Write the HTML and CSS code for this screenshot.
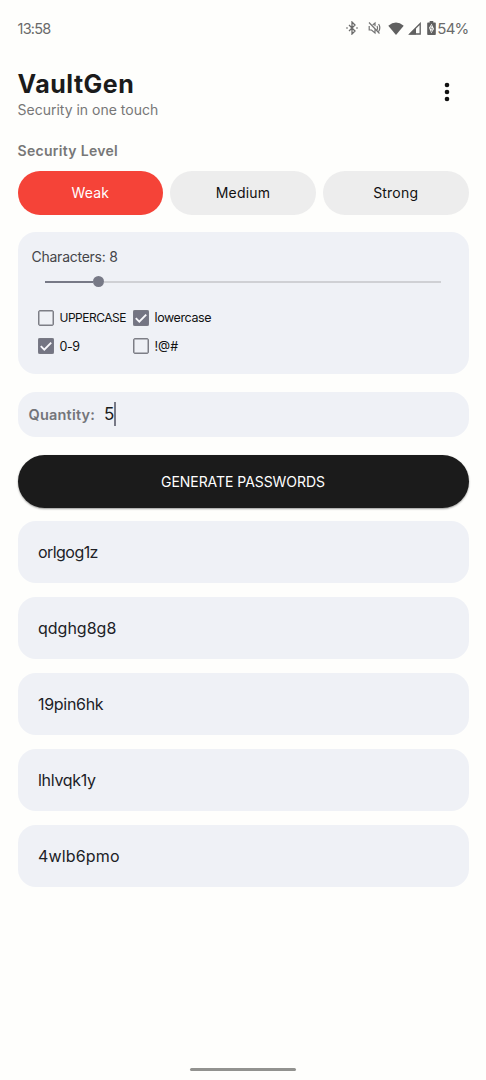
FILE: index.html
```html
<!DOCTYPE html>
<html lang="en">
<head>
<meta charset="utf-8">
<title>VaultGen</title>
<link rel="stylesheet" href="styles.css">
</head>
<body>
<div class="screen">
  <div class="status">
    <span class="clock">13:58</span>
    <div class="status-icons">
      <svg class="bt" width="12" height="14" viewBox="0 0 12 14"><path d="M3 4l6 6-3 3V1l3 3-6 6M1 6.200v1.600M11 6.200v1.600" fill="none" stroke="#6a6a6a" stroke-width="1.300"/></svg>
      <svg class="mute" width="13" height="14" viewBox="0 0 13 14"><path d="M1 1.500l10.500 11M1.200 5v4h2.300L7 12V8.300M4.700 4L7 2v3.200M9 5q1 2 0 4M10.600 3q2.400 3.700 0 7.500" fill="none" stroke="#737373" stroke-width="1.200"/></svg>
      <svg class="wifi" width="16" height="13" viewBox="0 0 16 13"><path d="M.3 3.700Q8-2.700 15.700 3.700L8 13Z" fill="#606060"/></svg>
      <svg class="signal" width="13" height="13" viewBox="0 0 13 13"><path d="M12.200 1.500V12H1.700Z" fill="none" stroke="#606060" stroke-width="1.300"/><path d="M1 12.600L8 5.500v7.100Z" fill="#606060"/></svg>
      <svg class="battery" width="9" height="14" viewBox="0 0 9 14"><path d="M2.700 0h3.600v1.400H8q.800 0 .8.800v11q0 .8-.8.800H1q-.800 0-.8-.8v-11q0-.8.8-.8h1.700Z" fill="#606060"/><path d="M4.600 2.800L2 6.800l2.300 5.400L7 8Z" fill="#fefefc"/><path d="M4.900 4L3.400 7.400h2L4.300 11" fill="none" stroke="#606060" stroke-width=".6"/></svg>
      <span class="percent">54%</span>
    </div>
  </div>

  <header class="header">
    <div>
      <h1 class="title">VaultGen</h1>
      <p class="subtitle">Security in one touch</p>
    </div>
    <svg class="more" width="6" height="20" viewBox="0 0 6 20"><g fill="#111"><circle cx="3" cy="3" r="2.300"/><circle cx="3" cy="10" r="2.300"/><circle cx="3" cy="17" r="2.300"/></g></svg>
  </header>

  <h2 class="section">Security Level</h2>
  <div class="levels">
    <button class="level level-active">Weak</button>
    <button class="level">Medium</button>
    <button class="level">Strong</button>
  </div>

  <section class="options">
    <div class="chars">Characters: 8</div>
    <div class="slider"><div class="slider-fill"></div><div class="thumb"></div><div class="slider-rest"></div></div>
    <div class="checks">
      <label class="check"><span class="box"></span><span class="t-upper">UPPERCASE</span></label>
      <label class="check"><span class="box box-on"><svg width="16" height="16" viewBox="0 0 16 16"><path d="M2.800 8.200l3.500 3.500L13.200 4.700" fill="none" stroke="#f8f8fc" stroke-width="1.900"/></svg></span><span class="t-lower">lowercase</span></label>
      <label class="check"><span class="box box-on"><svg width="16" height="16" viewBox="0 0 16 16"><path d="M2.800 8.200l3.500 3.500L13.200 4.700" fill="none" stroke="#f8f8fc" stroke-width="1.900"/></svg></span><span class="t-digits">0-9</span></label>
      <label class="check"><span class="box"></span><span class="t-symbols">!@#</span></label>
    </div>
  </section>

  <div class="quantity"><span class="quantity-label">Quantity:</span><span class="quantity-value">5</span><span class="caret"></span></div>
  <button class="generate">GENERATE PASSWORDS</button>

  <div class="list">
    <div class="password p1">orlgog1z</div>
    <div class="password">qdghg8g8</div>
    <div class="password p3">19pin6hk</div>
    <div class="password p4">lhlvqk1y</div>
    <div class="password p5">4wlb6pmo</div>
  </div>
  <div class="home"></div>
</div>
</body>
</html>
```
FILE: styles.css
```css
* { box-sizing: border-box; margin: 0; }
body { background: #fefefc; font-family: Inter, "Open Sans", sans-serif; color: #1b1b1b; }
.screen { width: 486px; height: 1080px; padding: 0 17.5px 9px; display: flex; flex-direction: column; overflow: hidden; }
button { border: 0; font: inherit; padding: 0; }

.status { height: 56px; flex: none; display: flex; justify-content: space-between; align-items: center; color: #6a6a6a; }
.clock { font-size: 14.5px; letter-spacing: -0.75px; }
.status-icons { display: flex; align-items: center; }
.mute { margin-left: 10px; }
.wifi { margin-left: 7px; }
.signal { margin-left: 4px; }
.battery { margin-left: 6px; }
.percent { font-size: 15px; letter-spacing: -0.8px; margin-left: 1.5px; }

.header { height: 85px; padding-top: 11px; display: flex; justify-content: space-between; }
.title { font-size: 25px; line-height: 34px; font-weight: 700; letter-spacing: 0.5px; }
.subtitle { font-size: 14px; line-height: 18px; color: #777; }
.more { margin: 15px 18.5px 0 0; }

.section { font-size: 14px; line-height: 20px; font-weight: 600; letter-spacing: 0.3px; color: #777; }
.levels { margin-top: 9.5px; display: grid; grid-template-columns: repeat(3, 1fr); gap: 7px; }
.level { height: 44px; border-radius: 22px; background: #ededed; color: #111; font-size: 14px; font-weight: 400; letter-spacing: 0.2px; }
.level-active { background: #f54338; color: #fff; }

.options { margin-top: 17px; height: 142px; border-radius: 18px; background: #eff1f6; padding: 15px 14px 13px; }
.chars { font-size: 14px; line-height: 20px; letter-spacing: -0.25px; color: #454549; }
.slider { height: 12px; margin: 9px 13.5px 0; display: flex; align-items: center; }
.slider-fill { width: 48px; height: 2px; background: #777986; }
.thumb { width: 11px; height: 11px; border-radius: 50%; background: #777986; }
.slider-rest { flex: 1; height: 2px; background: #cfd0d4; }
.checks { margin: 16px 0 0 6px; display: grid; grid-template-columns: 95px 1fr; grid-auto-rows: 28.5px; }
.check { display: flex; align-items: center; gap: 6px; font-size: 12.5px; color: #111; white-space: nowrap; }
.t-upper { font-size: 12px; letter-spacing: -0.5px; }
.t-lower { letter-spacing: -0.4px; }
.t-digits { letter-spacing: -0.4px; }
.box { width: 16px; height: 16px; flex: none; border: 1.5px solid #7d7e86; box-shadow: inset 0 0 0 .5px #7d7e86; border-radius: 2px; }
.box-on { border: 0; background: #747583; }
.box-on svg { display: block; }

.quantity { margin-top: 18px; height: 45px; flex: none; border-radius: 18px; background: #eff1f6; padding-left: 11px; display: flex; align-items: center; }
.quantity-label { width: 75.5px; font-size: 14.5px; font-weight: 600; letter-spacing: 0.2px; color: #74757a; }
.quantity-value { font-size: 17px; letter-spacing: -0.5px; }
.caret { width: 2px; height: 24px; background: #777986; }
.generate { margin-top: 18px; height: 53px; flex: none; border-radius: 26.5px; background: #1b1b1b; color: #fff; font-size: 14px; font-weight: 400; letter-spacing: -0.05px; box-shadow: 0 1px 2px rgba(0,0,0,.4); }

.list { margin-top: 13px; display: flex; flex-direction: column; gap: 14px; }
.password { height: 62px; border-radius: 18px; background: #eff1f6; padding-left: 20.5px; display: flex; align-items: center; font-size: 16px; color: #202126; }
.p1 { letter-spacing: -0.55px; }
.p3 { letter-spacing: -0.3px; }
.p4 { letter-spacing: -0.3px; }
.p5 { letter-spacing: 0.15px; }
.home { margin: auto auto 0; width: 106px; height: 3px; border-radius: 2px; background: #92928f; }
```
